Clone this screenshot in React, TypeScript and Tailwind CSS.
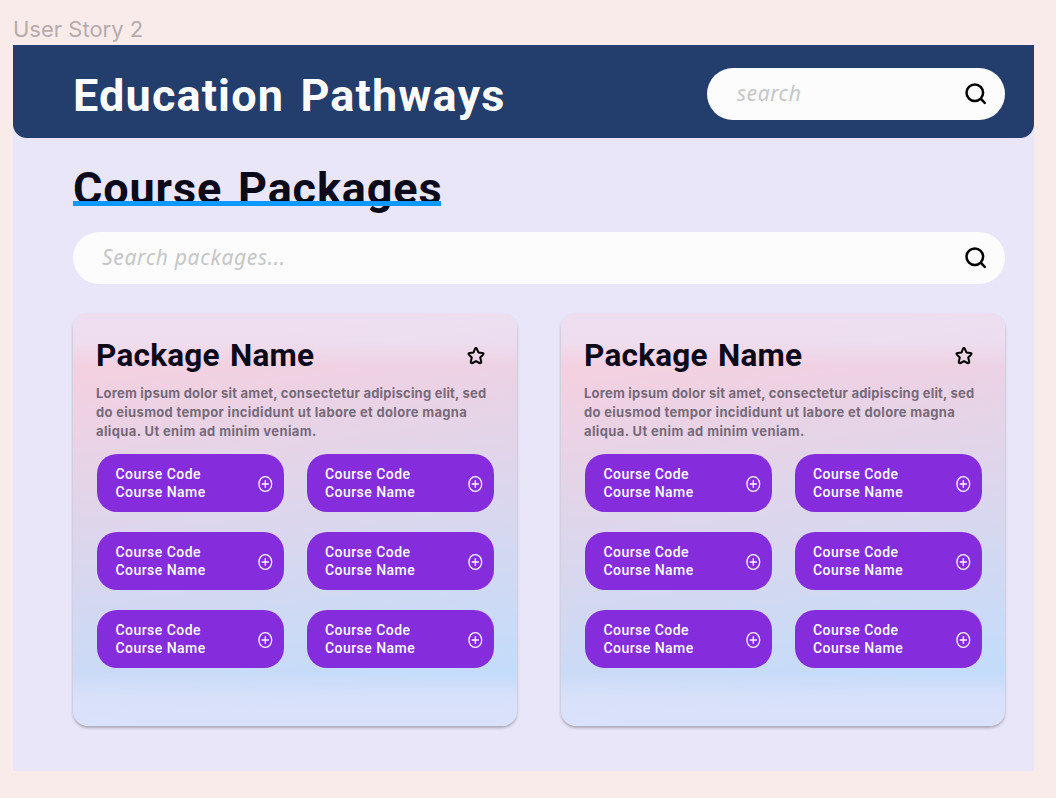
import React from "react";

function SearchIcon() {
  return (
    <svg className="h-6 w-6 shrink-0" viewBox="0 0 24 24" fill="none" stroke="#000" strokeWidth="2.5" strokeLinecap="round">
      <circle cx="10.8" cy="10.8" r="8.3" />
      <path d="M17 17l3.8 3.8" />
    </svg>
  );
}

function StarIcon() {
  return (
    <svg className="h-5 w-5 shrink-0" viewBox="0 0 20 20" fill="none" stroke="#000" strokeWidth="2" strokeLinejoin="round">
      <path d="M9 2.8Q10 1.2 10.9 2.8L12.4 6.4L16.4 6.9Q18.4 7.3 17 8.8L14.2 11.5L15.2 15.6Q15.4 17.8 13.5 17L10 15.1L6.5 17Q4.6 17.8 4.8 15.6L5.8 11.5L3 8.8Q1.6 7.3 3.6 6.9L7.6 6.4Z" />
    </svg>
  );
}

function PlusIcon() {
  return (
    <svg className="mt-px h-[18px] w-4 shrink-0" viewBox="0 0 16 18" fill="none" stroke="#fcfcfc" strokeWidth="1.3" strokeLinecap="round">
      <ellipse cx="8.3" cy="9" rx="6.4" ry="7.4" />
      <path d="M8.3 5.7v6.6M5.2 9h6.2" />
    </svg>
  );
}

function CourseButton() {
  return (
    <button className="flex h-[58px] w-[187px] items-center justify-between rounded-[20px] bg-[#852ddd] pr-[11px] pl-[18.5px] text-left text-[14px] leading-[17.6px] font-medium text-[#fcfcfc]">
      <span className="pt-[2px] tracking-[0.45px]">
        Course Code
        <br />
        Course Name
      </span>
      <PlusIcon />
    </button>
  );
}

function PackageCard() {
  return (
    <article className="h-[413px] w-[444px] rounded-[15px] bg-[linear-gradient(180deg,rgba(233,231,250,.62)_0%,rgba(233,231,250,.58)_7%,rgba(233,231,250,0)_13%,rgba(233,231,250,0)_87%,rgba(229,228,251,.6)_93%,rgba(229,228,251,.7)_100%),linear-gradient(172deg,#f5d0df_10%,#c3dcfa_88%)] pt-[23px] pl-6 shadow-[0_2px_3px_rgba(0,0,0,0.28)]">
      <div className="flex h-10 items-center justify-between pr-[31px]">
        <h2 className="-ml-px pb-px text-[31.5px] leading-10 font-bold tracking-[0.25px] text-[#0a0a1b] [word-spacing:2px]">Package Name</h2>
        <StarIcon />
      </div>
      <p className="-ml-px mt-[8px] font-['Inter',sans-serif] text-[13px] leading-[19px] font-bold tracking-[0.22px] whitespace-nowrap text-[#776a79]">
        Lorem ipsum dolor sit amet, consectetur adipiscing elit, sed
        <br />
        <span className="tracking-[0.32px]">do eiusmod tempor incididunt ut labore et dolore magna</span>
        <br />
        <span className="tracking-[0.38px]">aliqua. Ut enim ad minim veniam.</span>
      </p>
      <div className="mt-[13px] grid grid-cols-[187px_187px] gap-x-[22.5px] gap-y-5">
        {[0, 1, 2, 3, 4, 5].map((i) => (
          <CourseButton key={i} />
        ))}
      </div>
    </article>
  );
}

export default function App() {
  return (
    <div className="h-[798px] w-[1056px] overflow-hidden bg-[#faebeb] pl-[13px] font-['Roboto',sans-serif]">
      <div className="flex h-[45px] items-end pb-[2px] font-['Inter',sans-serif] text-[22px] leading-7 text-[#b7abac]">User Story 2</div>
      <main className="h-[726px] w-[1021.4px] bg-[#e9e6fa]">
        <header className="flex h-[93px] items-center justify-between rounded-b-[14px] bg-[#233d6c] pr-[29.4px] pl-[60px]">
          <h1 className="pt-[7px] text-[45px] leading-none font-bold tracking-[1.15px] text-[#fcfcfc] [word-spacing:4px]">Education Pathways</h1>
          <div className="mt-[5px] flex h-[52.5px] w-[298px] items-center justify-between rounded-full bg-[#fcfcfc] pr-[17px] pl-[30px]">
            <span className="font-['Noto_Sans','Roboto',sans-serif] text-[21px] tracking-[0.55px] text-[#c6c6c6] italic">search</span>
            <SearchIcon />
          </div>
        </header>
        <section className="pr-[29.4px] pl-[60px]">
          <div className="relative h-[94px] w-[368px] pt-[25px]">
            <h2 className="text-[45px] leading-[52px] font-bold tracking-[0.85px] whitespace-nowrap text-[#0a0a1b] [word-spacing:4px]">Course Packages</h2>
            <div className="absolute top-[63px] left-0 h-[4.5px] w-full bg-[#0d99ff]" />
          </div>
          <div className="flex h-[52px] items-center justify-between rounded-full bg-[#fcfcfc] pr-[17px] pl-[29px]">
            <span className="font-['Noto_Sans','Roboto',sans-serif] text-[21px] tracking-[0.67px] text-[#c6c6c6] italic">Search packages...</span>
            <SearchIcon />
          </div>
          <div className="mt-[29px] flex justify-between">
            <PackageCard />
            <PackageCard />
          </div>
        </section>
      </main>
    </div>
  );
}
